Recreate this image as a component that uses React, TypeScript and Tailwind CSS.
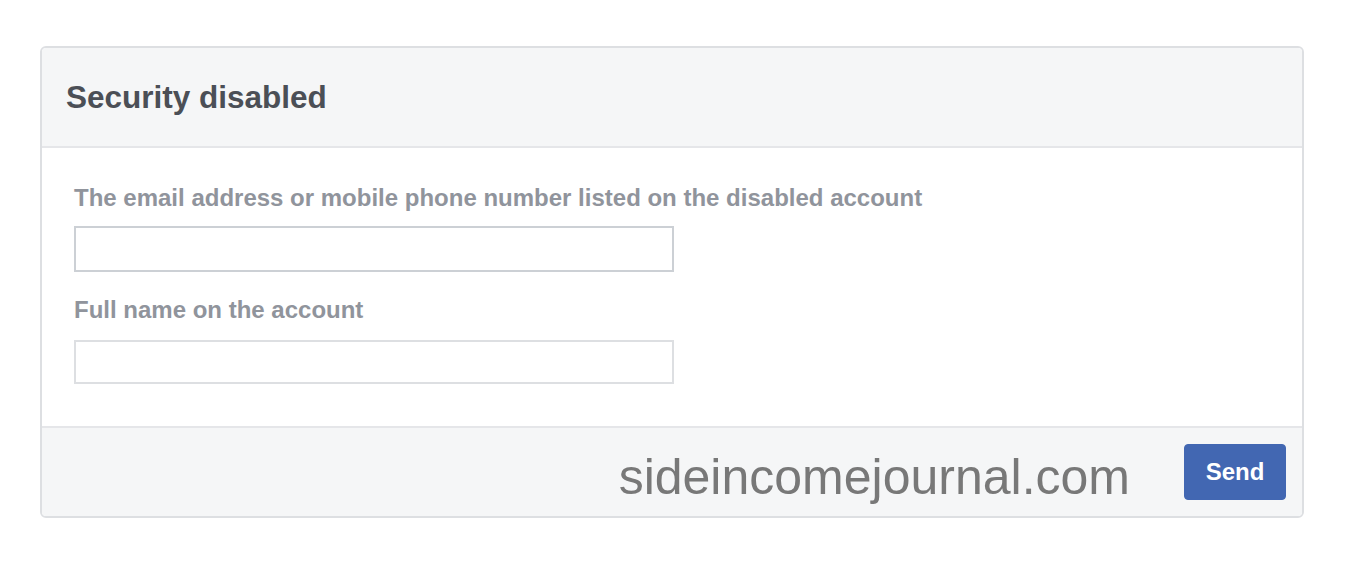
export default function App() {
  return (
    <div className="min-h-screen bg-white pt-[46px] pl-[40px]" style={{ fontFamily: '"Liberation Sans", Arial, sans-serif' }}>
      <div className="w-[1264px] rounded-[6px] border-2 border-[#dddfe2] overflow-hidden">
        <div className="h-[100px] bg-[#f5f6f7] border-b-2 border-[#e5e6e9] pl-[24px] flex items-center">
          <h1 className="text-[31.5px] font-bold text-[#4b4f56] leading-none mt-[1px]">Security disabled</h1>
        </div>
        <div className="bg-white pl-[32px] pt-[36px] pb-[42px]">
          <label className="block text-[24px] font-bold text-[#90949c] leading-[28px]">
            The email address or mobile phone number listed on the disabled account
          </label>
          <input className="mt-[14px] block w-[600px] h-[46px] border-2 border-[#ccd0d5] bg-white outline-none" />
          <label className="mt-[24px] block text-[24px] font-bold text-[#90949c] leading-[28px]">
            Full name on the account
          </label>
          <input className="mt-[16px] block w-[600px] h-[44px] border-2 border-[#dddfe2] bg-white outline-none" />
        </div>
        <div className="h-[90px] bg-[#f5f6f7] border-t-2 border-[#e5e6e9] flex items-center justify-end pr-[16px]">
          <span className="text-[50px] text-[#787878] leading-none mr-[54px] mt-[10px]">sideincomejournal.com</span>
          <button className="w-[102px] h-[56px] rounded-[4px] bg-[#4267b2] border border-[#4267b2] text-white text-[24px] font-bold">
            Send
          </button>
        </div>
      </div>
    </div>
  );
}
